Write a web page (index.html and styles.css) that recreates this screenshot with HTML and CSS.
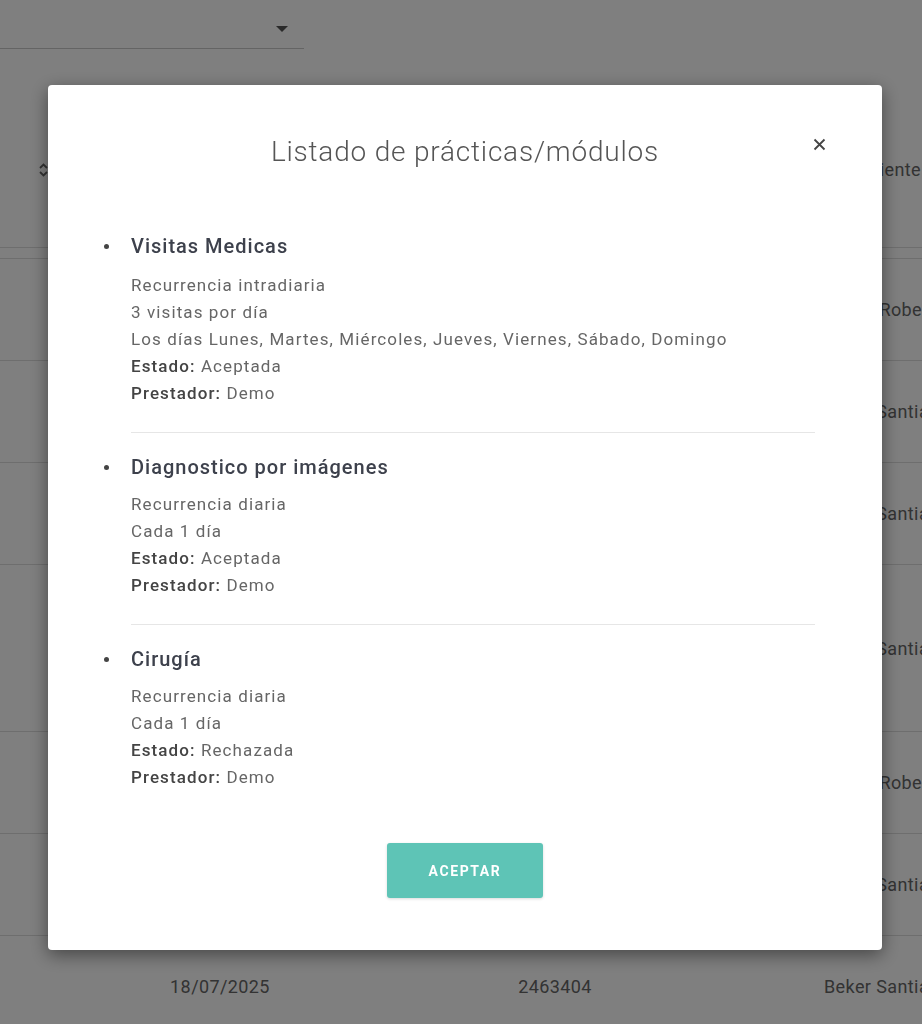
FILE: index.html
```html
<!DOCTYPE html>
<html lang="es">
<head>
    <meta charset="UTF-8">
    <meta name="viewport" content="width=device-width, initial-scale=1.0">
    <title>Listado de prácticas/módulos</title>
    <link rel="stylesheet" href="styles.css">
</head>
<body>

    <div class="page">
        <div class="filter">
            <span class="filter-arrow"></span>
        </div>

        <div class="grid-table">
            <div class="thead">
                <div class="th th-date">
                    <svg class="sort-icon" width="9" height="14" viewBox="0 0 9 14">
                        <path d="M1 5 L4.5 1.5 L8 5" fill="none" stroke="#666" stroke-width="1.8"/>
                        <path d="M1 9 L4.5 12.5 L8 9" fill="none" stroke="#666" stroke-width="1.8"/>
                    </svg>
                    Fecha
                </div>
                <div class="th th-num">Número</div>
                <div class="th th-name">Paciente</div>
            </div>
            <div class="spacer"></div>

            <div class="tr">
                <div class="td">21/07/2025</div>
                <div class="td">2463512</div>
                <div class="td td-name">Lopez Roberto</div>
            </div>
            <div class="tr">
                <div class="td">21/07/2025</div>
                <div class="td">2463498</div>
                <div class="td td-name">Beker Santiago</div>
            </div>
            <div class="tr">
                <div class="td">20/07/2025</div>
                <div class="td">2463477</div>
                <div class="td td-name">Beker Santiago</div>
            </div>
            <div class="tr tr-tall">
                <div class="td">19/07/2025</div>
                <div class="td">2463450</div>
                <div class="td td-name">Beker Santiago</div>
            </div>
            <div class="tr">
                <div class="td">19/07/2025</div>
                <div class="td">2463431</div>
                <div class="td td-name">Lopez Roberto</div>
            </div>
            <div class="tr">
                <div class="td">18/07/2025</div>
                <div class="td">2463419</div>
                <div class="td td-name">Beker Santiago</div>
            </div>
            <div class="tr">
                <div class="td">18/07/2025</div>
                <div class="td">2463404</div>
                <div class="td td-name">Beker Santiago</div>
            </div>
        </div>
    </div>

    <div class="overlay"></div>

    <div class="modal">
        <div class="modal-header">
            <h3 class="modal-title">Listado de prácticas/módulos</h3>
            <button class="close-btn" title="Cerrar">
                <svg width="13" height="13" viewBox="0 0 13 13">
                    <path d="M1.5 1.5 L11.5 11.5 M11.5 1.5 L1.5 11.5" stroke="#444" stroke-width="1.8"/>
                </svg>
            </button>
        </div>

        <ul class="practice-list">
            <li class="practice">
                <div class="practice-title">Visitas Medicas</div>
                <div class="practice-info">
                    <div>Recurrencia intradiaria</div>
                    <div>3 visitas por día</div>
                    <div>Los días Lunes, Martes, Miércoles, Jueves, Viernes, Sábado, Domingo</div>
                    <div><b>Estado:</b> Aceptada</div>
                    <div><b>Prestador:</b> Demo</div>
                </div>
            </li>
            <li class="practice">
                <div class="practice-title">Diagnostico por imágenes</div>
                <div class="practice-info">
                    <div>Recurrencia diaria</div>
                    <div>Cada 1 día</div>
                    <div><b>Estado:</b> Aceptada</div>
                    <div><b>Prestador:</b> Demo</div>
                </div>
            </li>
            <li class="practice">
                <div class="practice-title">Cirugía</div>
                <div class="practice-info">
                    <div>Recurrencia diaria</div>
                    <div>Cada 1 día</div>
                    <div><b>Estado:</b> Rechazada</div>
                    <div><b>Prestador:</b> Demo</div>
                </div>
            </li>
        </ul>

        <div class="modal-footer">
            <button class="accept-btn">Aceptar</button>
        </div>
    </div>

</body>
</html>
```

FILE: styles.css
```css
* {
    margin: 0;
    padding: 0;
    box-sizing: border-box;
}

body {
    font-family: Roboto, "Liberation Sans", sans-serif;
    background: #fff;
    color: #666;
    width: 922px;
    height: 1024px;
    overflow: hidden;
}

/* pagina de fondo */
.filter {
    width: 304px;
    height: 49px;
    border-bottom: 1px solid #c8c8c8;
    display: flex;
    justify-content: flex-end;
    align-items: center;
    padding-right: 16px;
    padding-top: 10px;
}

.filter-arrow {
    width: 0;
    height: 0;
    border-left: 6px solid transparent;
    border-right: 6px solid transparent;
    border-top: 6px solid #555;
}

.grid-table {
    margin-top: 43px;
}

.thead,
.tr {
    display: grid;
    grid-template-columns: 440px 230px 1fr;
    align-items: center;
    font-size: 18px;
    letter-spacing: 0.4px;
    white-space: nowrap;
}

.thead {
    height: 156px;
    border-bottom: 1px solid #ddd;
}

.th {
    text-align: center;
    color: #666;
}

.th-date {
    text-align: left;
    padding-left: 39px;
    display: flex;
    align-items: center;
    gap: 8px;
}

.th-name {
    text-align: left;
    padding-left: 178px;
}

.spacer {
    height: 10px;
}

.tr {
    height: 102px;
    border-top: 1px solid #ddd;
}

.tr-tall {
    height: 167px;
}

.td {
    text-align: center;
}

.td-name {
    text-align: left;
    padding-left: 154px;
}

.overlay {
    position: fixed;
    inset: 0;
    background: rgba(0, 0, 0, 0.5);
}

/* modal */
.modal {
    position: fixed;
    left: 48px;
    top: 85px;
    width: 834px;
    background: #fff;
    border-radius: 4px;
    box-shadow: 0 5px 18px rgba(0, 0, 0, 0.45);
    padding: 50px 67px 52px 56px;
}

.modal-header {
    position: relative;
    text-align: center;
    padding-left: 11px;
}

.modal-title {
    font-size: 28px;
    line-height: 34px;
    font-weight: 300;
    letter-spacing: 0.8px;
    color: #555;
}

.close-btn {
    position: absolute;
    right: -11px;
    top: 3px;
    border: none;
    background: none;
    cursor: pointer;
    width: 13px;
    height: 13px;
}

.close-btn svg {
    display: block;
}

.practice-list {
    list-style: none;
    margin-top: 63px;
}

.practice {
    display: grid;
    grid-template-columns: 27px 1fr;
}

.practice::before {
    content: "";
    width: 5px;
    height: 5px;
    border-radius: 50%;
    background: #444;
    margin-top: 12px;
    grid-row: 1 / span 2;
}

.practice-title,
.practice-info {
    grid-column: 2;
}

.practice-title {
    font-size: 20px;
    line-height: 28px;
    font-weight: 500;
    letter-spacing: 1px;
    color: #3d414c;
}

.practice-info {
    margin-top: 12px;
    font-size: 17px;
    line-height: 27px;
    letter-spacing: 1.1px;
    color: #666;
    padding-bottom: 25px;
    border-bottom: 1px solid #e6e6e6;
}

.practice-info b {
    font-weight: 500;
    color: #444;
}

.practice + .practice {
    padding-top: 20px;
}

.practice + .practice .practice-info {
    margin-top: 10px;
}

.practice:last-child .practice-info {
    border-bottom: none;
    padding-bottom: 0;
}

.modal-footer {
    display: flex;
    justify-content: center;
    margin-top: 52px;
    padding-left: 11px;
}

.accept-btn {
    width: 156px;
    height: 55px;
    border: none;
    border-radius: 3px;
    background: #5ec4b6;
    color: #fff;
    font-family: Roboto, "Liberation Sans", sans-serif;
    font-size: 14px;
    font-weight: 700;
    text-transform: uppercase;
    letter-spacing: 1.6px;
    box-shadow: 0 1px 3px rgba(0, 0, 0, 0.15);
    cursor: pointer;
}
```
